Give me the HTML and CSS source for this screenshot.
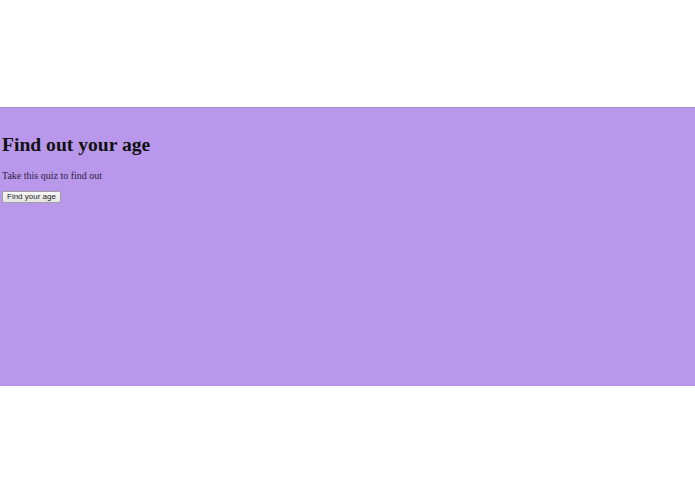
FILE: index.html
```html
<!DOCTYPE html>
<html>
<head>
<meta charset="utf-8">
<link rel="stylesheet" href="styles.css">
</head>
<body>
<div class="top"></div>
<div class="band">
  <h1 class="title">Find out your age</h1>
  <p class="lead">Take this quiz to find out</p>
  <button class="btn">Find your age</button>
</div>
</body>
</html>
```
FILE: styles.css
```css
html, body { margin: 0; padding: 0; background: #fff; }
body { font-family: "Liberation Serif", "Times New Roman", serif; color: #1a0f2a; }
.top { height: 107px; border-bottom: 1px solid #a58fc8; }
.band {
  background: #b998ec;
  height: 278px;
  padding: 25px 2px 0;
  box-sizing: border-box;
}
.title { margin: 0; font-size: 19.6px; font-weight: bold; line-height: 24px; color: #111; }
.lead { margin: 12px 0 0; font-size: 10px; line-height: 14px; color: #2a1c40; }
.btn {
  display: block;
  margin: 8px 0 0 0;
  font-family: "Liberation Sans", Arial, sans-serif;
  font-size: 8px;
  height: 12px;
  padding: 0 4px;
  line-height: 10px;
  background: linear-gradient(#f8f8f8, #e4e4e4);
  border: 1px solid #a0a0a0;
  border-radius: 2px;
  color: #222;
}
```
